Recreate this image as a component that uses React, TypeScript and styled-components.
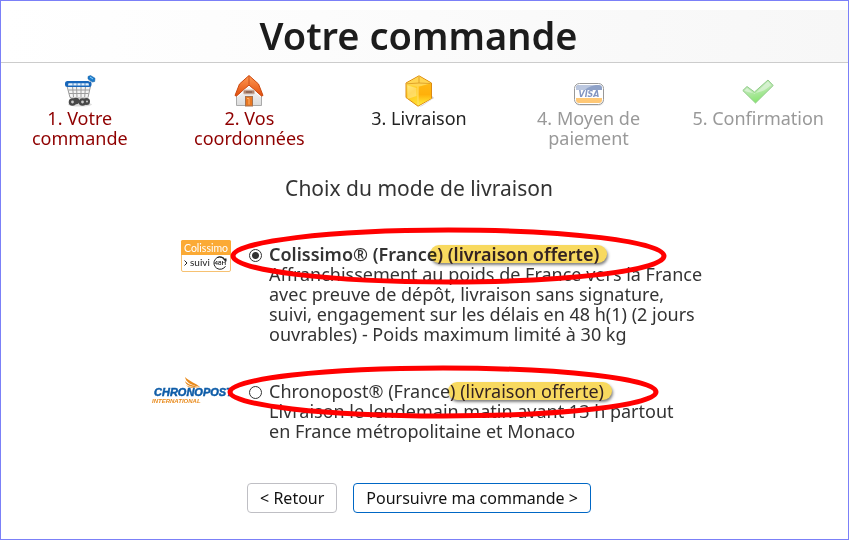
import React from 'react';
import styled, { createGlobalStyle } from 'styled-components';

const GlobalStyle = createGlobalStyle`
  *, *::before, *::after { box-sizing: border-box; }
  body {
    margin: 0;
    background: #fff;
    color: #333;
    font: 18px/20px "Noto Sans", "Open Sans", sans-serif;
  }
`;

const Page = styled.main`
  min-height: 100vh;
  padding-top: 9px;
  border: 1px solid #7b80f8;
  overflow: hidden;
`;

const Header = styled.header`
  padding: 0 12px 2px 0;
  border-bottom: 1px solid #ccc;
  background: linear-gradient(90deg, #fff, #f7f7f7);
  text-align: center;
`;

const Title = styled.h1`
  margin: 0;
  color: #1c1c1c;
  font-size: 38px;
  font-weight: 600;
  line-height: 50px;
`;

const Content = styled.div`
  margin: 0 5px 0 -6px;
  display: flex;
  flex-direction: column;
  align-items: center;
`;

const Steps = styled.ol`
  width: 100%;
  margin: 0;
  padding: 12px 0 0;
  display: grid;
  grid-template-columns: repeat(5, 1fr);
  list-style: none;
  text-align: center;
`;

type StepState = 'done' | 'current' | 'pending';

const stepColors: Record<StepState, string> = {
  done: '#8f0000',
  current: '#222',
  pending: '#999',
};

const Step = styled.li<{ $state: StepState }>`
  display: flex;
  flex-direction: column;
  align-items: center;
  gap: 1px;
  padding: 0 20px;
  color: ${({ $state }) => stepColors[$state]};

  svg {
    display: block;
    opacity: ${({ $state }) => ($state === 'pending' ? 0.6 : 1)};
  }
`;

const StepLink = styled.a`
  color: inherit;
  text-decoration: none;
`;

const StepText = styled.span`
  margin: 0 -12px;
`;

const SectionTitle = styled.h2`
  margin: 26px 0 42px;
  font-size: 21px;
  font-weight: 400;
  line-height: 28px;
`;

const Form = styled.form`
  display: flex;
  flex-direction: column;
  align-items: center;
`;

const Options = styled.div`
  display: flex;
  flex-direction: column;
  gap: 37px;
  padding-left: 20px;
`;

const Option = styled.div`
  position: relative;
  display: grid;
  grid-template-columns: 80px 38px minmax(0, 438px);
  align-items: start;
`;

const OptionLogo = styled.div`
  justify-self: end;
  height: 20px;
  margin-top: -4px;

  svg { display: block; overflow: visible; }
`;

const Radio = styled.input`
  appearance: none;
  width: 13px;
  height: 13px;
  margin: 5px 0 0 18px;
  border: 1px solid #333;
  border-radius: 50%;
  background: #fff;

  &:checked {
    background: radial-gradient(circle, #333 0 3px, #fff 4px);
  }
`;

const OptionLabel = styled.label<{ $strong?: boolean }>`
  display: block;
  font-weight: ${({ $strong }) => ($strong ? 600 : 400)};
`;

const Highlight = styled.mark<{ $lead: number }>`
  display: inline-block;
  margin-left: ${({ $lead }) => -$lead}px;
  padding: 0 8px 0 ${({ $lead }) => $lead}px;
  border-radius: 9px;
  background: #f8d95f;
  box-shadow: 1px 2px 3px rgba(0, 0, 0, 0.5);
  color: #332222;
  line-height: 18px;
  mix-blend-mode: multiply;
`;

const Description = styled.p`
  margin: 0;
  white-space: pre-line;
`;

const Circled = styled.svg<{ $left: number; $top: number; $width: number; $height: number }>`
  position: absolute;
  left: ${({ $left }) => $left}px;
  top: ${({ $top }) => $top}px;
  width: ${({ $width }) => $width}px;
  height: ${({ $height }) => $height}px;
  pointer-events: none;
`;

const Actions = styled.div`
  display: flex;
  gap: 16px;
  margin-top: 42px;
`;

const Button = styled.button<{ $primary?: boolean }>`
  height: 30px;
  padding: 0 12px;
  border: 1px solid ${({ $primary }) => ($primary ? '#0067c5' : '#bfbfc4')};
  border-radius: 4px;
  background: #fff;
  color: #111;
  font: inherit;
  font-size: 16px;
  line-height: 26px;
`;

const CartIcon = () => (
  <svg width="32" height="32" viewBox="0 0 32 32" aria-hidden="true">
    <ellipse cx="16" cy="29.500" rx="12" ry="2" fill="#ddd" />
    <path d="M3 11h23.500l-2.500 11.500H6z" fill="#f4f4f4" stroke="#999" />
    <path d="M4.500 15h21M5 18.500h19.500M8.500 11l1 11M12.500 11l.5 11M17 11v11M21.500 11l-.8 11" stroke="#9c9c9c" fill="none" />
    <path d="M7 22h17v2H7z" fill="#ccc" />
    <rect x="1" y="6" width="26.500" height="6" rx="2.500" fill="#1766ba" />
    <path d="M4.500 8.200h20l.5 2.300h-21z" fill="#e6f1fa" />
    <path d="M9 8v3M13 8v3M17 8v3M21 8v3" stroke="#4b89c9" />
    <path d="M25 6.500l2-3" stroke="#ddd" strokeWidth="2" />
    <path d="M24 1.500l2.500-1 4.500 2.700-.3 3.300-2.200.5-4.500-3z" fill="#1b7ccc" stroke="#0d559b" strokeWidth=".5" />
    <path d="M26 2l3 2" stroke="#8fd0fa" />
    <g fill="#484848">
      <circle cx="12" cy="26" r="3.300" />
      <circle cx="8.500" cy="27" r="3.800" />
      <circle cx="22.500" cy="26.500" r="3.500" />
      <circle cx="18.500" cy="27" r="3.800" />
    </g>
    <g fill="#ccc">
      <circle cx="8.500" cy="27" r="1.400" />
      <circle cx="18.500" cy="27" r="1.400" />
      <circle cx="23" cy="26.500" r="1" />
    </g>
  </svg>
);

const HouseIcon = () => (
  <svg width="32" height="32" viewBox="0 0 32 32" aria-hidden="true">
    <defs>
      <linearGradient id="roof" x2="0" y2="1">
        <stop stopColor="#ff9a55" />
        <stop offset="1" stopColor="#e24e0c" />
      </linearGradient>
      <linearGradient id="wall" x2="0" y2="1">
        <stop stopColor="#fff" />
        <stop offset="1" stopColor="#dcdcdc" />
      </linearGradient>
    </defs>
    <path d="M3.500 18L16 7l12.500 11v12.500h-25z" fill="url(#wall)" stroke="#aaa" />
    <path d="M16 .5l9.500 8.500L30 20.500l-1.500.5L16 10 3.500 21l-1.500-.5L6.500 9z" fill="url(#roof)" stroke="#cc480f" strokeLinejoin="round" />
    <path d="M16 1v8.500" stroke="#c8440c" strokeWidth=".8" />
    <path d="M4 22L16 11.300 28 22" fill="none" stroke="#fff" />
    <rect x="12.500" y="21.500" width="7" height="9.500" fill="#e87722" stroke="#a5714e" />
    <path d="M14 23.500h2v6" stroke="#ffb26b" fill="none" />
    <rect x="10.500" y="15" width="11" height="4" rx="1" fill="#b08570" stroke="#d5c5bb" />
    <path d="M13 17h6" stroke="#705040" />
  </svg>
);

const BoxIcon = () => (
  <svg width="32" height="32" viewBox="0 0 32 32" aria-hidden="true">
    <defs>
      <linearGradient id="side" x2="0.600" y2="1">
        <stop stopColor="#fff17c" />
        <stop offset=".5" stopColor="#ffc91c" />
        <stop offset="1" stopColor="#ffe43a" />
      </linearGradient>
      <linearGradient id="shade" x2="0" y2="1">
        <stop stopColor="#ffb814" />
        <stop offset=".5" stopColor="#ffb00a" />
        <stop offset="1" stopColor="#fff03c" />
      </linearGradient>
    </defs>
    <path d="M16 32l13-8v-3l2 2-12 8z" fill="#ccc" />
    <path d="M16 .8L28.500 8v15.500L15 31.200 3 22.500V8z" fill="url(#side)" stroke="#dc8a12" strokeLinejoin="round" />
    <path d="M16 1.500L28 8.200 15 12 3.500 8.500z" fill="#ffd552" />
    <path d="M28 8.500v14.700L15 30.500V12z" fill="url(#shade)" />
    <path d="M16 2v6L4 8.800M16 8l11.500.5" fill="none" stroke="#d9981f" strokeWidth=".8" />
    <path d="M15 12v18" fill="none" stroke="#ffdf70" />
    <path d="M4.500 10.500l9 2.500v8l-9 3z" fill="#fff" opacity=".3" />
  </svg>
);

const CardIcon = () => (
  <svg width="32" height="32" viewBox="0 0 32 32" aria-hidden="true">
    <defs>
      <clipPath id="cardFace"><rect x="3" y="10" width="26" height="18" rx="3" /></clipPath>
    </defs>
    <rect x="2" y="10" width="29" height="21" rx="5" fill="#ddd" />
    <rect x="1.500" y="8.500" width="29" height="21" rx="5" fill="#fff" stroke="#555" />
    <g clipPath="url(#cardFace)">
      <path d="M3 10h26v5H3z" fill="#4565a5" />
      <path d="M3 10h20c-6 1-9 3-11 5H3z" fill="#8fa3cb" />
      <path d="M3 23h26v5H3z" fill="#ffa41c" />
    </g>
    <text x="16" y="22.300" textAnchor="middle" fontFamily="DejaVu Sans, sans-serif" fontSize="8" fontWeight="700" fontStyle="italic" fill="#31519b">VISA</text>
  </svg>
);

const CheckIcon = () => (
  <svg width="32" height="32" viewBox="0 0 32 32" aria-hidden="true">
    <defs>
      <linearGradient id="tick" x2="0.300" y2="1">
        <stop stopColor="#9edc94" />
        <stop offset=".5" stopColor="#8ada78" />
        <stop offset="1" stopColor="#3ad512" />
      </linearGradient>
    </defs>
    <path d="M.8 15.500L5 11.500l7.500 5.500L26 5l5.200 5.500L13.500 28z" fill="url(#tick)" stroke="#48a83c" strokeLinejoin="round" />
    <path d="M2.500 15.500L5 13l7.500 6L26 6.500l3 3.500c-5 5-9 7-16 8-5 0-8-1-10.500-2.500z" fill="#fff" opacity=".4" />
  </svg>
);

const ColissimoLogo = () => (
  <svg width="50" height="32" viewBox="0 0 50 32" role="img" aria-label="Colissimo suivi 48h">
    <rect x=".5" y=".5" width="49" height="31" rx="1.500" fill="#fff" stroke="#f6c172" />
    <path d="M0 15V1.500Q0 0 1.500 0h47Q50 0 50 1.500V15z" fill="#fbaa35" />
    <text x="3" y="11.500" fontFamily="Lato, sans-serif" fontSize="10.500" fill="#fff">Colissimo</text>
    <path d="M3.500 20.500l2.500 2.500-2.500 2.500" fill="none" stroke="#222" />
    <text x="9" y="26" fontFamily="Lato, sans-serif" fontSize="10" fill="#222">suivi</text>
    <path d="M43 18.200a6.200 6.200 0 1 0 1.500 8M36 17.500a6.200 6.200 0 0 1 8.500 4" fill="none" stroke="#222" />
    <path d="M41 18.500h4.500v3z" fill="#222" />
    <text x="33.500" y="25.200" fontFamily="Lato, sans-serif" fontSize="6" fontWeight="700" fill="#222">48H</text>
  </svg>
);

const ChronopostLogo = () => (
  <svg width="80" height="30" viewBox="0 0 80 30" role="img" aria-label="Chronopost International">
    <path d="M34 0c1 5 5 8 15 10C45 6 39 5 34 0zM34 4c1 4 5 6 12 6-4-2-9-2-12-6zM49 10c-6 1-11 0-14-2 2 3 8 4 14 2z" fill="#e88a1c" />
    <text x="3" y="18.500" fontFamily="Liberation Sans, sans-serif" fontSize="11" fontWeight="700" fontStyle="italic" fill="#0f5da8" stroke="#0f5da8" strokeWidth=".5">CHRONOPOST</text>
    <text x="1" y="25.500" fontFamily="Liberation Sans, sans-serif" fontSize="6" fontWeight="700" fontStyle="italic" fill="#e88a1c">INTERNATIONAL</text>
  </svg>
);

type Ring = { left: number; top: number; width: number; height: number };

const RedRing = ({ left, top, width, height }: Ring) => (
  <Circled $left={left} $top={top} $width={width} $height={height} viewBox={`0 0 ${width} ${height}`} aria-hidden="true">
    <ellipse cx={width / 2} cy={height / 2} rx={width / 2 - 3} ry={height / 2 - 3} fill="none" stroke="#f00" strokeWidth="5" />
  </Circled>
);

const steps: { label: string; state: StepState; icon: React.ReactNode }[] = [
  { label: '1. Votre commande', state: 'done', icon: <CartIcon /> },
  { label: '2. Vos coordonnées', state: 'done', icon: <HouseIcon /> },
  { label: '3. Livraison', state: 'current', icon: <BoxIcon /> },
  { label: '4. Moyen de paiement', state: 'pending', icon: <CardIcon /> },
  { label: '5. Confirmation', state: 'pending', icon: <CheckIcon /> },
];

const options = [
  {
    id: 'colissimo',
    name: 'Colissimo® (France',
    text: 'Affranchissement au poids de France vers la France avec preuve de dépôt, livraison sans signature, suivi, engagement sur les délais en 48 h(1) (2 jours ouvrables) - Poids maximum limité à 30 kg',
    logo: <ColissimoLogo />,
    lead: 7,
    ring: { left: 79, top: -17, width: 437, height: 58 },
  },
  {
    id: 'chronopost',
    name: 'Chronopost® (France',
    text: 'Livraison le lendemain matin avant 13 h partout\nen France métropolitaine et Monaco',
    logo: <ChronopostLogo />,
    lead: 2,
    ring: { left: 76, top: -16, width: 432, height: 54 },
  },
];

export default function App() {
  const [selected, setSelected] = React.useState('colissimo');

  return (
    <>
      <GlobalStyle />
      <Page>
        <Header>
          <Title>Votre commande</Title>
        </Header>
        <Content>
          <Steps>
            {steps.map(({ label, state, icon }) => (
              <Step key={label} $state={state} aria-current={state === 'current' ? 'step' : undefined}>
                {icon}
                {state === 'done' ? <StepLink href="#">{label}</StepLink> : <StepText>{label}</StepText>}
              </Step>
            ))}
          </Steps>
          <SectionTitle>Choix du mode de livraison</SectionTitle>
          <Form onSubmit={(event) => event.preventDefault()}>
            <Options role="radiogroup" aria-label="Choix du mode de livraison">
              {options.map((option) => (
                <Option key={option.id}>
                  <OptionLogo>{option.logo}</OptionLogo>
                  <Radio
                    type="radio"
                    name="delivery"
                    id={option.id}
                    checked={selected === option.id}
                    onChange={() => setSelected(option.id)}
                  />
                  <div>
                    <OptionLabel htmlFor={option.id} $strong={selected === option.id}>
                      {option.name}
                      <Highlight $lead={option.lead}>) (livraison offerte)</Highlight>
                    </OptionLabel>
                    <Description>{option.text}</Description>
                  </div>
                  <RedRing {...option.ring} />
                </Option>
              ))}
            </Options>
            <Actions>
              <Button type="button">&lt; Retour</Button>
              <Button type="submit" $primary>Poursuivre ma commande &gt;</Button>
            </Actions>
          </Form>
        </Content>
      </Page>
    </>
  );
}
